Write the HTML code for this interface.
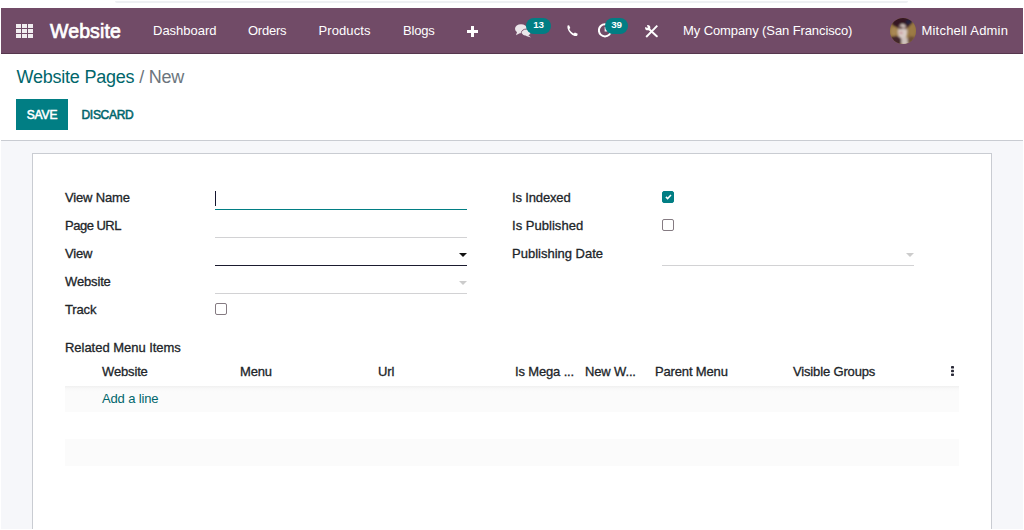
<!DOCTYPE html>
<html lang="en">
<head>
<meta charset="utf-8">
<title>Odoo - Website Pages</title>
<style>
*{box-sizing:border-box;margin:0;padding:0}
html,body{width:1024px;height:530px;overflow:hidden;background:#fff}
body{font-family:"Liberation Sans",sans-serif;font-size:13px;color:#212529;position:relative}
.abs{position:absolute;white-space:nowrap;line-height:1}
#topline{position:absolute;left:115px;top:1px;width:793px;height:2px;background:#eef0f3;border-radius:0 0 3px 3px}
#nav{position:absolute;left:1px;top:8px;width:1022px;height:46px;background:#714B67;border-bottom:1px solid #55364d}
#nav .t{position:absolute;white-space:nowrap;color:#fff;font-size:13px;line-height:1;top:16px}
#brand{position:absolute;left:49px;top:13.5px;color:#fff;font-size:19.5px;-webkit-text-stroke:0.7px #fff;line-height:1;letter-spacing:0.12px;white-space:nowrap}
.badge{position:absolute;top:10px;height:16px;border-radius:8px;background:#017e84;color:#fff;font-size:9.8px;font-weight:bold;line-height:14.6px;text-align:center;letter-spacing:-0.1px}
#cp{position:absolute;left:1px;top:54px;width:1022px;height:87px;background:#fff;border-bottom:1px solid #c9ccd2}
#content{position:absolute;left:1px;top:141px;width:1022px;height:388px;overflow:hidden;background:#f6f7fa}
#sheet{position:absolute;left:31px;top:12px;width:960px;height:400px;background:#fff;border:1px solid #c9ccd2}
.lbl{position:absolute;white-space:nowrap;line-height:1;font-size:13px;color:#212529;-webkit-text-stroke:0.3px #212529;letter-spacing:-0.15px}
.ul{position:absolute;height:1px;background:#d2d2d4}
.cb{position:absolute;width:12px;height:12px;border:1px solid #857b82;border-radius:2px;background:#fff}
.caret{position:absolute;width:0;height:0;border-left:4px solid transparent;border-right:4px solid transparent;border-top:4px solid #ccc}
.stripe{position:absolute;left:65px;width:894px;background:#fbfbfb}
</style>
</head>
<body>
<div id="topline"></div>
<div id="nav">
  <svg style="position:absolute;left:15px;top:16px" width="18" height="15" viewBox="0 0 18 15">
    <g fill="#f1edf0">
      <rect x="0" y="0" width="5" height="4"/><rect x="6" y="0" width="5" height="4"/><rect x="12" y="0" width="5" height="4"/>
      <rect x="0" y="5" width="5" height="4"/><rect x="6" y="5" width="5" height="4"/><rect x="12" y="5" width="5" height="4"/>
      <rect x="0" y="10" width="5" height="4"/><rect x="6" y="10" width="5" height="4"/><rect x="12" y="10" width="5" height="4"/>
    </g>
  </svg>
  <div id="brand">Website</div>
  <div class="t" style="left:152px">Dashboard</div>
  <div class="t" style="left:247px;letter-spacing:-0.25px">Orders</div>
  <div class="t" style="left:317.5px;letter-spacing:0.1px">Products</div>
  <div class="t" style="left:402px;letter-spacing:-0.2px">Blogs</div>
  <svg style="position:absolute;left:466px;top:18px" width="11" height="11" viewBox="0 0 11 11"><path d="M4 0h3v4h4v3h-4v4h-3v-4h-4v-3h4z" fill="#fff"/></svg>
  <!-- comments -->
  <svg style="position:absolute;left:514px;top:16px" width="17" height="14" viewBox="0 0 17 14">
    <ellipse cx="6" cy="4.8" rx="6" ry="4.5" fill="#ebe6ea"/>
    <path d="M2.2 7.6 L1 11.2 L5.6 8.8z" fill="#ebe6ea"/>
    <ellipse cx="11.2" cy="8.6" rx="4.8" ry="3.5" fill="#ebe6ea" stroke="#714B67" stroke-width="0.9"/>
    <path d="M12.6 10.6 L16 13.6 L10.4 11.8z" fill="#ebe6ea"/>
  </svg>
  <div class="badge" style="left:525px;width:25px">13</div>
  <!-- phone -->
  <svg style="position:absolute;left:565px;top:17px" width="12" height="12" viewBox="0 0 12 12">
    <path d="M1.6 0.5 L3.1 0.2 L4.3 2.9 L3.3 3.9 C4.1 5.8 5.9 7.6 7.8 8.4 L8.9 7.5 L11.7 8.8 L11.3 10.4 C10.2 11.6 7.8 11.2 5.2 9 C2.6 6.6 0.8 3 1.6 0.5z" fill="#fff"/>
  </svg>
  <!-- clock -->
  <svg style="position:absolute;left:597px;top:14px" width="15" height="16" viewBox="0 0 15 16">
    <circle cx="7" cy="8.3" r="6.1" fill="none" stroke="#fff" stroke-width="2"/>
    <path d="M7.4 5v3.8h3" fill="none" stroke="#f3eef2" stroke-width="1.5"/>
  </svg>
  <div class="badge" style="left:604px;width:23px">39</div>
  <!-- tools -->
  <svg style="position:absolute;left:644px;top:17px" width="13" height="13" viewBox="0 0 13 13">
    <path d="M3.4 3.4 L11.8 11.2" stroke="#fff" stroke-width="2" stroke-linecap="round"/>
    <circle cx="2.7" cy="2.7" r="2.6" fill="#fff"/>
    <path d="M2.9 2.9 L-1 1.6 L1.6 -1z" fill="#714B67"/>
    <path d="M12.3 0.7 L1.2 12" stroke="#fff" stroke-width="1.9"/>
  </svg>
  <div class="t" style="left:682px;letter-spacing:-0.1px">My Company (San Francisco)</div>
  <svg style="position:absolute;left:889px;top:10px" width="26" height="26" viewBox="0 0 26 26">
    <defs><clipPath id="av"><circle cx="13" cy="13" r="13"/></clipPath><filter id="bl" x="-20%" y="-20%" width="140%" height="140%"><feGaussianBlur stdDeviation="0.8"/></filter></defs>
    <g clip-path="url(#av)">
      <rect x="-3" y="-3" width="32" height="32" fill="#94733f"/>
      <g filter="url(#bl)">
      <ellipse cx="12" cy="3.5" rx="10.5" ry="7" fill="#351820"/>
      <ellipse cx="19" cy="4" rx="3.2" ry="2.6" fill="#262040"/>
      <ellipse cx="4" cy="13.5" rx="3.5" ry="4.5" fill="#a88752"/>
      <ellipse cx="22" cy="12" rx="3.5" ry="6" fill="#9c7a45"/>
      <ellipse cx="12.6" cy="14" rx="4.8" ry="8" fill="#d9cbc5"/>
      <ellipse cx="10.5" cy="9.8" rx="2.6" ry="1.5" fill="#5a3a3a"/>
      <ellipse cx="15.4" cy="10" rx="1.8" ry="1.2" fill="#6a4848"/>
      <ellipse cx="11" cy="14.8" rx="1.6" ry="0.9" fill="#b8566a" opacity="0.8"/>
      <ellipse cx="5.5" cy="23" rx="6.5" ry="5" fill="#432529"/>
      <ellipse cx="14.8" cy="23.5" rx="3.6" ry="4.5" fill="#cfc2bd"/>
      <ellipse cx="21.5" cy="22.5" rx="4" ry="4" fill="#6e5038"/>
      </g>
    </g>
  </svg>
  <div class="t" style="left:920.5px;letter-spacing:0.2px">Mitchell Admin</div>
</div>
<div id="cp">
  <div class="abs" style="left:15.5px;top:14px;font-size:18px;color:#01666b;letter-spacing:-0.22px">Website Pages <span style="color:#6c757d">/ New</span></div>
  <div style="position:absolute;left:15px;top:45px;width:52px;height:31px;background:#017e84;color:#fff;font-size:12px;-webkit-text-stroke:0.55px #fff;letter-spacing:-0.1px;line-height:32px;text-align:center">SAVE</div>
  <div class="abs" style="left:80.5px;top:55px;font-size:12px;letter-spacing:-0.3px;-webkit-text-stroke:0.55px #01666b;color:#01666b">DISCARD</div>
</div>
<div id="content">
  <div id="sheet"></div>
</div>
<!-- form fields (absolute to body) -->
<div class="lbl" style="left:65px;top:191px">View Name</div>
<div class="lbl" style="left:65px;top:219px;letter-spacing:-0.5px">Page URL</div>
<div class="lbl" style="left:65px;top:247px">View</div>
<div class="lbl" style="left:65px;top:275px">Website</div>
<div class="lbl" style="left:65px;top:303px">Track</div>
<div style="position:absolute;left:215px;top:191px;width:1px;height:15px;background:#14142e"></div>
<div class="ul" style="left:215px;top:209px;width:252px;background:#017e84"></div>
<div class="ul" style="left:215px;top:237px;width:252px"></div>
<div class="ul" style="left:215px;top:265px;width:252px;background:#1b1b2f"></div>
<div class="ul" style="left:215px;top:293px;width:252px"></div>
<div class="caret" style="left:459px;top:253px;border-top-color:#111"></div>
<div class="caret" style="left:459px;top:281px"></div>
<div class="cb" style="left:215px;top:303px"></div>

<div class="lbl" style="left:512px;top:191px">Is Indexed</div>
<div class="lbl" style="left:512px;top:219px;letter-spacing:0.03px">Is Published</div>
<div class="lbl" style="left:512px;top:247px;letter-spacing:0">Publishing Date</div>
<div class="cb" style="left:662px;top:191px;background:#017e84;border-color:#017e84"></div>
<svg style="position:absolute;left:664.5px;top:194px" width="7" height="6" viewBox="0 0 7 6"><path d="M0.9 2.9 L2.6 4.6 L6 1" fill="none" stroke="#fff" stroke-width="1.5"/></svg>
<div class="cb" style="left:662px;top:219px"></div>
<div class="ul" style="left:662px;top:265px;width:252px"></div>
<div class="caret" style="left:906px;top:253px"></div>

<div class="lbl" style="left:65px;top:341px;letter-spacing:-0.03px">Related Menu Items</div>
<div class="lbl" style="left:102px;top:365px">Website</div>
<div class="lbl" style="left:240px;top:365px">Menu</div>
<div class="lbl" style="left:378px;top:365px">Url</div>
<div class="lbl" style="left:515px;top:365px">Is Mega ...</div>
<div class="lbl" style="left:585px;top:365px">New W...</div>
<div class="lbl" style="left:655px;top:365px">Parent Menu</div>
<div class="lbl" style="left:793px;top:365px">Visible Groups</div>
<svg style="position:absolute;left:951px;top:366px" width="3" height="10" viewBox="0 0 3 10"><rect width="3" height="2.6" rx="0.7" fill="#2a2a38"/><rect y="3.7" width="3" height="2.6" rx="0.7" fill="#2a2a38"/><rect y="7.4" width="3" height="2.6" rx="0.7" fill="#2a2a38"/></svg>
<div class="stripe" style="top:386px;height:26px;background:linear-gradient(#f0f0f0,#f9f9f9 3px,#fbfbfb 6px)"></div>
<div class="abs" style="left:102px;top:392px;font-size:13px;color:#01666b;letter-spacing:-0.15px">Add a line</div>
<div class="stripe" style="top:439px;height:27px"></div>
</body>
</html>
